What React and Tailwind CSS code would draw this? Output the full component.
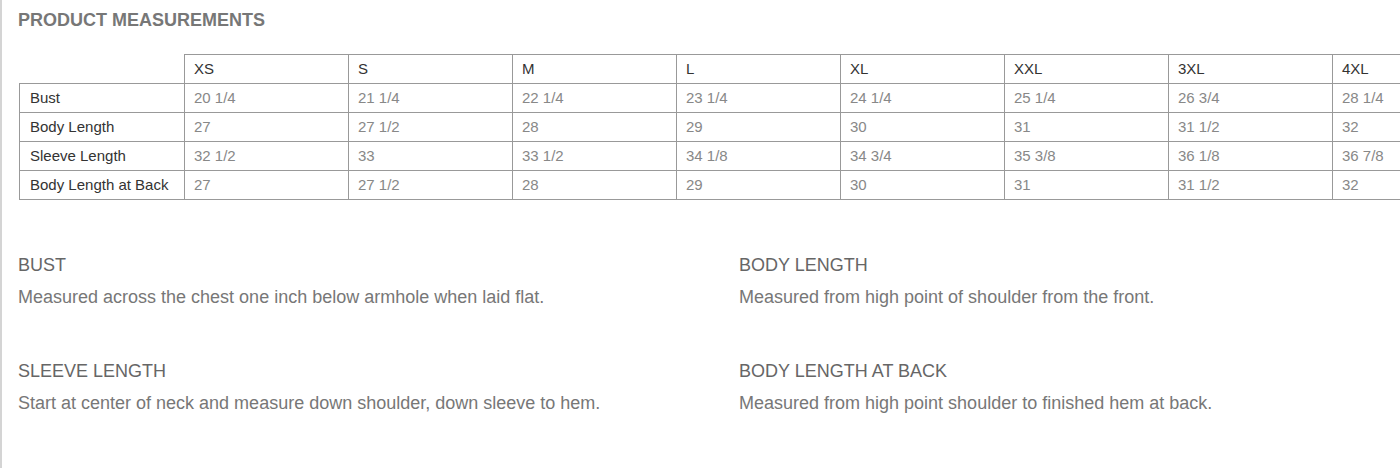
import React from "react";

const sizes = ["XS", "S", "M", "L", "XL", "XXL", "3XL", "4XL"];
const rows = [
  ["Bust", ["20 1/4", "21 1/4", "22 1/4", "23 1/4", "24 1/4", "25 1/4", "26 3/4", "28 1/4"]],
  ["Body Length", ["27", "27 1/2", "28", "29", "30", "31", "31 1/2", "32"]],
  ["Sleeve Length", ["32 1/2", "33", "33 1/2", "34 1/8", "34 3/4", "35 3/8", "36 1/8", "36 7/8"]],
  ["Body Length at Back", ["27", "27 1/2", "28", "29", "30", "31", "31 1/2", "32"]],
];

const defs = [
  ["BUST", "Measured across the chest one inch below armhole when laid flat."],
  ["BODY LENGTH", "Measured from high point of shoulder from the front."],
  ["SLEEVE LENGTH", "Start at center of neck and measure down shoulder, down sleeve to hem."],
  ["BODY LENGTH AT BACK", "Measured from high point shoulder to finished hem at back."],
];

export default function App() {
  return (
    <div
      className="h-[468px] w-[1400px] overflow-hidden bg-white border-l-2 border-[#d4d4d4]"
      style={{ fontFamily: '"Liberation Sans", Arial, sans-serif' }}
    >
      <div className="pl-[16px] pt-[10px]">
        <h2 className="text-[18px] leading-[20px] font-bold text-[#777]">PRODUCT MEASUREMENTS</h2>

        <div className="mt-[24px] ml-[1px] w-max text-[15px]">
          <div className="flex h-[29px]">
            <div className="w-[165px]" />
            {sizes.map((s) => (
              <div
                key={s}
                className="w-[164px] border-l border-t border-[#999] pl-[9px] pt-[1px] flex items-center text-[#333]"
              >
                {s}
              </div>
            ))}
          </div>
          {rows.map(([label, vals], i) => (
            <div
              key={label}
              className={
                "flex border-t border-[#999] " +
                (i === rows.length - 1 ? "h-[28px] border-b box-content" : "h-[29px]")
              }
            >
              <div className="w-[165px] border-l border-[#999] pl-[10px] pt-[1px] flex items-center text-[#333]">
                {label}
              </div>
              {vals.map((v, j) => (
                <div
                  key={j}
                  className="w-[164px] border-l border-[#999] pl-[9px] pt-[1px] flex items-center text-[#888]"
                >
                  {v}
                </div>
              ))}
            </div>
          ))}
        </div>

        <div className="mt-[49px] grid grid-cols-[721px_1fr] gap-y-[42px] text-[18px] leading-[32px]">
          {defs.map(([h, d]) => (
            <div key={h}>
              <div className="text-[#666]">{h}</div>
              <div className="text-[#777]">{d}</div>
            </div>
          ))}
        </div>
      </div>
    </div>
  );
}
